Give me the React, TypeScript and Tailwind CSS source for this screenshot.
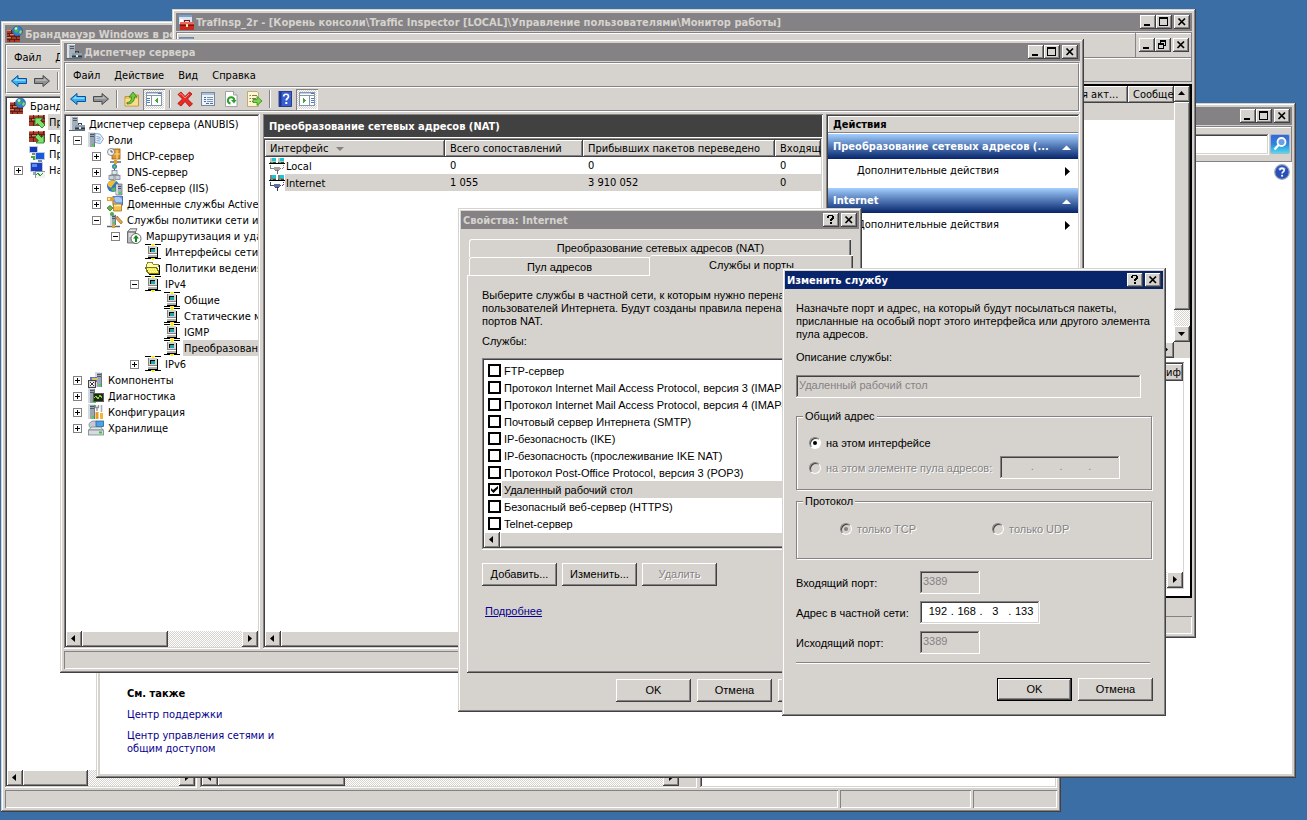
import React from "react";
import type { ReactNode } from "react";

/* ---------- shared 3D edges ---------- */
const WINDOW_EDGE =
  "bg-[#d6d3ce] shadow-[inset_-1px_-1px_#424142,inset_1px_1px_#d6d3ce,inset_-2px_-2px_#848284,inset_2px_2px_#fff]";
const RAISED =
  "bg-[#d6d3ce] shadow-[inset_-1px_-1px_#424142,inset_1px_1px_#fff,inset_-2px_-2px_#848284]";
const SUNKEN =
  "shadow-[inset_-1px_-1px_#fff,inset_1px_1px_#848284,inset_-2px_-2px_#d6d3ce,inset_2px_2px_#424142]";
const UI_FONT = "font-['DejaVu_Sans_Condensed','DejaVu_Sans',sans-serif]";
const DIALOG_FONT = "font-['Liberation_Sans',Arial,sans-serif]";
const DITHER =
  "bg-[repeating-conic-gradient(#fff_0_25%,#d6d3ce_0_50%)] bg-[length:2px_2px]";

/* ---------- icons ---------- */
function Ico({ children, crisp }: { children: ReactNode; crisp?: boolean }) {
  return (
    <svg
      className="block h-4 w-4 shrink-0"
      viewBox="0 0 16 16"
      shapeRendering={crisp ? "crispEdges" : "auto"}
      aria-hidden="true"
    >
      {children}
    </svg>
  );
}

function Tower({ x, y, w = 7, h = 13 }: { x: number; y: number; w?: number; h?: number }) {
  return (
    <g>
      <rect x={x} y={y} width={w} height={h} fill="#9aa7b2" />
      <rect x={x} y={y} width={2} height={h} fill="#d3dbe1" />
      <rect x={x + 2} y={y} width={w - 2} height={1} fill="#e4e9ed" />
      <rect x={x + 2} y={y + 2} width={w - 3} height={1} fill="#4d5a66" />
      <rect x={x + 2} y={y + 4} width={w - 3} height={1} fill="#4d5a66" />
      <rect x={x + w - 1} y={y + 1} width={1} height={h - 1} fill="#6c7985" />
      <rect x={x + w - 3} y={y + h - 3} width={2} height={2} fill="#3fd63f" />
    </g>
  );
}

const ServerBoxIcon = () => (
  <Ico crisp>
    <rect x={1} y={0} width={8} height={15} fill="#a4b0ba" />
    <rect x={1} y={0} width={2} height={15} fill="#dde4e9" />
    <rect x={3} y={0} width={6} height={1} fill="#e9eef1" />
    <rect x={4} y={2} width={4} height={1} fill="#4d5a66" />
    <rect x={4} y={4} width={4} height={1} fill="#4d5a66" />
    <rect x={0} y={14} width={9} height={1} fill="#56636e" />
    <path d="M9 9V7h3v2" fill="none" stroke="#39424a" />
    <rect x={6} y={9} width={10} height={6} fill="#5f6f7d" />
    <rect x={6} y={9} width={10} height={2} fill="#90a0ad" />
    <rect x={6} y={12} width={10} height={1} fill="#2f3942" />
    <rect x={10} y={11} width={2} height={2} fill="#dfe6ea" />
  </Ico>
);

const Bricks = () => (
  <g>
    <rect x={0} y={4} width={13} height={12} fill="#a63d2a" />
    <path
      d="M0 7.5h13M0 10.5h13M0 13.5h13M4.500 4v3M9.500 4v3M2.500 8v2M7.500 8v2M11.500 8v2M4.500 11v2M9.500 11v2M2.500 14v2M7.500 14v2"
      stroke="#5f1d13"
      fill="none"
    />
    <path d="M0 4.500h4M5 4.500h4M3 8.500h4M0 11.500h4" stroke="#d98a70" fill="none" />
  </g>
);

const FirewallIcon = () => (
  <Ico>
    <Bricks />
    <circle cx={10.500} cy={5} r={5} fill="#2f7fd0" stroke="#1b5796" strokeWidth={0.600} />
    <path d="M7 3c1-2 3-2.500 4.500-2.500L10 3l2 1-2 3-2-1z" fill="#4bb54a" />
    <path d="M13 4l2 1-1 3-2-1z" fill="#8fd86a" />
    <circle cx={9} cy={2.500} r={1.300} fill="#cfeaff" />
  </Ico>
);

const RuleIcon = ({ up }: { up?: boolean }) => (
  <Ico>
    <g transform="translate(0 -3)">
      <rect x={0} y={4} width={16} height={11} fill="#a63d2a" />
      <path
        d="M0 7.500h16M0 10.500h16M4.500 4v3M9.500 4v3M14.500 4v3M2.500 8v2M7.500 8v2M12.500 8v2M4.500 11v4M9.500 11v2"
        stroke="#5f1d13"
        fill="none"
      />
      <path d="M0 4.500h4M5 4.500h4M3 8.500h4M10 4.500h4" stroke="#d98a70" fill="none" />
    </g>
    {up ? (
      <path d="M6 4h8l-2.500 2.500L16 11l-3 3-4.500-4.500L6 12z" fill="#7ee26a" stroke="#147a1a" strokeWidth={0.800} />
    ) : (
      <path d="M15 13H7l2.500-2.500L6 7l3-3 3.500 3.500L15 5z" fill="#7ee26a" stroke="#147a1a" strokeWidth={0.800} />
    )}
  </Ico>
);

const LinkedPcIcon = () => (
  <Ico crisp>
    <rect x={0} y={0} width={9} height={7} fill="#c3ccd6" />
    <rect x={1} y={1} width={7} height={5} fill="#1238b8" />
    <rect x={3} y={7} width={3} height={2} fill="#7a8794" />
    <rect x={6} y={6} width={10} height={8} fill="#c3ccd6" />
    <rect x={7} y={7} width={8} height={6} fill="#1b58e0" />
    <rect x={9} y={14} width={4} height={2} fill="#7a8794" />
    <path d="M2 11h3v3" stroke="#3fae3f" strokeWidth={2} fill="none" />
  </Ico>
);

const MonitorIcon = () => (
  <Ico crisp>
    <rect x={1} y={0} width={13} height={10} fill="#c3ccd6" />
    <rect x={2} y={1} width={11} height={8} fill="#1b3fc0" />
    <rect x={3} y={2} width={5} height={3} fill="#5f8cf0" />
    <rect x={4} y={10} width={6} height={3} fill="#9aa7b2" />
    <rect x={6} y={9} width={10} height={7} fill="#f0f5ec" stroke="#8a949c" />
    <path d="M7 13l2-2 2 3 3-3" stroke="#2a9a3c" fill="none" />
  </Ico>
);

const ToolboxIcon = () => (
  <Ico crisp>
    <rect x={0} y={0} width={15} height={11} fill="#dbe4ee" />
    <path d="M0.500 0.500h14v10h-14z" fill="none" stroke="#70869c" />
    <rect x={1} y={1} width={13} height={2} fill="#7f9fc4" />
    <rect x={2} y={5} width={3} height={4} fill="#fff" />
    <path d="M6.500 8V6.500h5V8" stroke="#7a1511" fill="none" />
    <rect x={2} y={8} width={14} height={8} fill="#c42a22" />
    <rect x={2} y={8} width={14} height={2} fill="#ea6a5e" />
    <rect x={2} y={11} width={14} height={1} fill="#7a1511" />
    <rect x={8} y={10} width={2} height={3} fill="#f4e6a0" />
  </Ico>
);

const BackIcon = () => (
  <Ico>
    <path d="M0.500 8L7 2.500v3h8.500v5H7v3z" fill="#35aef2" stroke="#0c4f98" />
    <path d="M2.500 8L6 5v1.500h8.500v1.200H3z" fill="#9fe0ff" />
  </Ico>
);
const ForwardIcon = () => (
  <Ico>
    <path d="M15.500 8L9 2.500v3H0.500v5H9v3z" fill="#8f9193" stroke="#4a4b4d" />
    <path d="M13.500 8L10 5v1.500H1.500v1.200H13z" fill="#bcbec0" />
  </Ico>
);
const FolderUpIcon = () => (
  <Ico>
    <path d="M1 5.500h5l1.500-1.500H14.500V15H1z" fill="#f2c55c" stroke="#b5862a" strokeWidth={0.800} />
    <path d="M1.500 8h12.500v6.500H1.500z" fill="#f9dc8c" />
    <path d="M3 11.500c3 0 4.500-2 4.500-5.500H5L9 1l4 5h-2.500c0 4-2.500 7-7.500 7z" fill="#6ccc3c" stroke="#2f7d18" strokeWidth={0.800} />
  </Ico>
);
const PaneIcon = ({ right }: { right?: boolean }) => (
  <Ico crisp>
    <rect x={0} y={1} width={16} height={14} fill="#fff" />
    <rect x={0} y={1} width={16} height={1} fill="#8497ad" />
    <rect x={0} y={2} width={16} height={1} fill="#c3cfdb" />
    <rect x={0} y={4} width={16} height={1} fill="#8497ad" />
    <rect x={12} y={2} width={3} height={1} fill="#4d76c0" />
    <path d="M0.500 1.500v13h15v-13" stroke="#8497ad" fill="none" />
    <rect x={right ? 10 : 5} y={5} width={1} height={9} fill="#8497ad" />
    {right ? (
      <path d="M12 7.500h3M12 9.500h3M12 11.500h3" stroke="#4a7fc4" />
    ) : (
      <path d="M1 7.500h3M1 9.500h3M1 11.500h3" stroke="#4a7fc4" />
    )}
    {right ? <path d="M4 7l3 2.500L4 12z" fill="#3aa935" /> : <path d="M12 7L9 9.500l3 2.500z" fill="#3aa935" />}
  </Ico>
);
const DeleteIcon = () => (
  <Ico>
    <path d="M1 3.500L4 1l4 4.500L12.500 1 15 3l-4.500 5 5 5L12.500 15.500 8 10.500l-4 4.500L0.800 12.500 5.500 8z" fill="#ee2a22" stroke="#a01010" strokeWidth={0.800} />
    <path d="M2.500 3.500L4 2.500l4 4.500 4-4" stroke="#ff8a80" fill="none" />
  </Ico>
);
const PropertiesIcon = () => (
  <Ico crisp>
    <rect x={1.500} y={1.500} width={13} height={13} fill="#eef3f9" stroke="#72889f" />
    <rect x={2} y={2} width={12} height={2} fill="#a9c0da" />
    <path d="M3.500 6.500h2M3.500 8.500h2M3.500 10.500h2" stroke="#3d6fb4" />
    <path d="M7 6.500h6M7 8.500h6M7 10.500h6" stroke="#7d93a8" />
    <path d="M6 12.500h3M10 12.500h3" stroke="#3d6fb4" />
  </Ico>
);
const RefreshIcon = () => (
  <Ico>
    <path d="M2.500 0.500h8l3.500 3.500v11.500H2.500z" fill="#fff" stroke="#8d9296" strokeWidth={0.800} />
    <path d="M10.500 0.500v3.500H14" fill="#d9dde0" stroke="#8d9296" strokeWidth={0.800} />
    <path d="M7.500 12.500A3.200 3.200 0 1 1 11.300 9" fill="none" stroke="#2fa02b" strokeWidth={2} />
    <path d="M8 9h5.500l-2.500 3.500z" fill="#2fa02b" />
  </Ico>
);
const ExportIcon = () => (
  <Ico>
    <path d="M1.500 0.500H11l1.500 1.500v13.500h-11z" fill="#fdf6d3" stroke="#b59a55" strokeWidth={0.800} />
    <path d="M3.500 4.500H5M3.500 7.500H5M3.500 10.500H5M6 4.500h5M6 7.500h4M6 10.500h4" stroke="#8a7a4a" />
    <path d="M7 8.500h4V5.500l5 4.500-5 4.500v-3H7z" fill="#7ed348" stroke="#2f8a1b" strokeWidth={0.800} />
  </Ico>
);
const HelpBookIcon = () => (
  <Ico>
    <rect x={2} y={0.500} width={12.500} height={15} fill="#3a5fd0" stroke="#12297a" strokeWidth={0.800} />
    <rect x={2.500} y={1} width={2} height={14} fill="#1b358f" />
    <path d="M6.700 5.500c0-3 4.800-3 4.800 0 0 2-2.300 2-2.300 4" stroke="#fff" strokeWidth={1.700} fill="none" />
    <rect x={8.300} y={11} width={2} height={2} fill="#fff" />
  </Ico>
);

const RolesIcon = () => (
  <Ico>
    <Tower x={0} y={0} w={7} h={15} />
    <path d="M7 1.500l5 0.500 3.500 5-3 4.500-5.500-1z" fill="#e9f3fd" stroke="#6a93c0" strokeWidth={0.800} />
    <path d="M8.500 4.500l4 1M8.500 6.500l4.500 0.800M8.500 8.500l3.500 0.600" stroke="#6a93c0" strokeWidth={0.800} />
  </Ico>
);
const DhcpIcon = () => (
  <Ico>
    <rect x={5} y={1} width={8} height={10} fill="#e0982a" stroke="#93570c" strokeWidth={0.800} />
    <path d="M10 2v9M5 6h8" stroke="#ffd98a" />
    <circle cx={4} cy={4} r={3.500} fill="#f2f5f8" stroke="#6d7780" strokeWidth={0.800} />
    <path d="M4 2v2h2" stroke="#333" strokeWidth={0.800} fill="none" />
    <path d="M3 14h11" stroke="#5d6770" strokeWidth={1.500} />
    <rect x={7} y={12} width={3} height={4} fill="#e0a02a" />
  </Ico>
);
const DnsIcon = () => (
  <Ico>
    <circle cx={7.500} cy={2.500} r={2.500} fill="#2f7fc0" />
    <path d="M6 2l2-1 1 2-2 1.500z" fill="#5fc25a" />
    <path d="M7.500 5v2" stroke="#555" />
    <rect x={5} y={6.500} width={5} height={4} fill="#dfe5ea" stroke="#7a8791" strokeWidth={0.800} />
    <path d="M3 12v-1h9v1" stroke="#7a8791" fill="none" />
    <rect x={2} y={11.500} width={5} height={4} fill="#c9d2d9" stroke="#7a8791" strokeWidth={0.800} />
    <rect x={8} y={11.500} width={5} height={4} fill="#c9d2d9" stroke="#7a8791" strokeWidth={0.800} />
  </Ico>
);
const IisIcon = () => (
  <Ico>
    <circle cx={6} cy={6} r={6} fill="#2c76c8" />
    <path d="M1 2.500C4 0 8 0 9 1.500L6 5 4 8 1 6z" fill="#f3bc31" />
    <path d="M4 9l4-2 1 3-3 2z" fill="#58b858" />
    <path d="M9 4h6v11H9z" fill="#a4b0ba" stroke="#6c7985" strokeWidth={0.800} />
    <path d="M10 4.500v10" stroke="#e4e9ed" strokeWidth={1.500} />
    <path d="M11 6.500h3M11 8.500h3" stroke="#4d5a66" />
    <rect x={12} y={12} width={2} height={2} fill="#3fd63f" />
  </Ico>
);
const AdIcon = () => (
  <Ico>
    <rect x={6} y={0} width={9.500} height={9} fill="#6f9de0" stroke="#2f5c9e" strokeWidth={0.800} />
    <path d="M7 2l2-1h3l3 2v3H9z" fill="#a9c8f4" />
    <path d="M6.500 8h8v7h-8z" fill="#f0c04a" stroke="#a57719" strokeWidth={0.800} />
    <path d="M7 9.500h7" stroke="#fff0b8" strokeWidth={1.500} />
    <path d="M0 1h6l2 2-2 2H0z" fill="#e6a02a" />
    <circle cx={2} cy={3} r={1} fill="#fff" />
    <path d="M5 5l4 4" stroke="#e6a02a" strokeWidth={1.500} />
    <path d="M3 9.500l3 2.500-3 3-3-3z" fill="#6db04a" stroke="#3f7a24" strokeWidth={0.800} />
  </Ico>
);
const NpsIcon = () => (
  <Ico>
    <g transform="translate(3 2)">
      <Tower x={0} y={0} w={6} h={11} />
    </g>
    <circle cx={5} cy={2} r={2} fill="#4ca94a" />
    <path d="M10 4l5.500 6-1.500 2-4.500-5z" fill="#e8a64a" stroke="#99601a" strokeWidth={0.700} />
    <path d="M0 14.500h13" stroke="#5d6770" strokeWidth={1.500} />
    <rect x={5} y={13} width={3} height={3} fill="#e0a02a" />
  </Ico>
);
const RrasIcon = () => (
  <Ico>
    <path d="M1.500 4L4 0.800h7L9.500 4z" fill="#e8e8e8" stroke="#555" strokeWidth={0.800} />
    <path d="M1.500 4h8v11h-8z" fill="#b9bcc0" stroke="#555" strokeWidth={0.800} />
    <path d="M3 6h5M3 8h5" stroke="#fff" />
    <circle cx={10} cy={10.500} r={5} fill="#fff" stroke="#555" strokeWidth={0.900} />
    <path d="M10 7l3 3.500h-2V14H9v-3.500H7z" fill="#0b8a1a" />
  </Ico>
);
const NetIcon = () => (
  <Ico crisp>
    <rect x={0} y={0} width={16} height={1} fill="#000" />
    <rect x={6} y={0} width={4} height={1} fill="#f6ee1c" />
    <rect x={7} y={1} width={2} height={1} fill="#f6ee1c" />
    <rect x={3} y={2} width={9} height={8} fill="#848284" />
    <rect x={4} y={2} width={8} height={7} fill="#d6d3ce" />
    <rect x={5} y={4} width={5} height={4} fill="#000" />
    <rect x={6} y={5} width={4} height={3} fill="#18a8a8" />
    <rect x={3} y={11} width={10} height={2} fill="#b5b2ad" />
    <rect x={3} y={10} width={10} height={1} fill="#fff" />
    <rect x={12} y={3} width={1} height={10} fill="#000" />
    <rect x={3} y={13} width={10} height={1} fill="#000" />
    <rect x={0} y={14} width={16} height={1} fill="#000" />
    <rect x={6} y={14} width={4} height={1} fill="#f6ee1c" />
    <rect x={7} y={15} width={2} height={1} fill="#f6ee1c" />
  </Ico>
);
const FolderOpenIcon = () => (
  <Ico crisp>
    <path d="M1.500 12V4.500L3 2.500h4l1.500 2h5V7" fill="#fffbb0" stroke="#8a8a20" />
    <path d="M0.500 7.500h11l3 6h-11z" fill="#f7ef4a" stroke="#77771a" />
    <path d="M2 9.500h10M3 11.500h10" stroke="#fffde0" strokeDasharray="1 1" />
    <path d="M14.500 5v9M4 14.500h11" stroke="#000" />
  </Ico>
);
const ComponentsIcon = () => (
  <Ico crisp>
    <g transform="translate(6 0)">
      <Tower x={1} y={0} w={7} h={15} />
    </g>
    <rect x={2} y={5} width={7} height={5} fill="#5a78c4" />
    <rect x={4} y={6} width={6} height={2} fill="#e5b96a" />
    <rect x={0.500} y={8.500} width={7} height={7} fill="#d8d8d8" stroke="#444" />
    <rect x={2} y={10} width={4} height={4} fill="#333" />
    <rect x={3} y={10} width={2} height={4} fill="#fff" />
    <rect x={2} y={11} width={4} height={2} fill="#fff" />
    <rect x={3} y={11} width={2} height={2} fill="#333" />
  </Ico>
);
const DiagnosticsIcon = () => (
  <Ico crisp>
    <Tower x={0} y={0} w={7} h={15} />
    <rect x={5} y={5} width={10} height={8} fill="#1d2a14" stroke="#5c5c5c" />
    <path d="M6 10l2-2 2 3 2-4 2 3" stroke="#8fd13a" fill="none" />
    <rect x={6} y={14} width={2} height={1} fill="#3fd63f" />
  </Ico>
);
const ConfigIcon = () => (
  <Ico>
    <Tower x={0} y={0} w={7} h={15} />
    <path d="M9 8v7" stroke="#e89b1c" strokeWidth={3} />
    <path d="M13.500 9v6" stroke="#f2b53a" strokeWidth={3} />
    <path d="M9 7V3.500M7.500 1v2.500h3V1" stroke="#8c9399" strokeWidth={1.300} fill="none" />
    <path d="M13.500 1v7" stroke="#a8b0b6" strokeWidth={1.600} />
  </Ico>
);
const StorageIcon = () => (
  <Ico>
    <ellipse cx={6} cy={5} rx={5} ry={4} fill="#c3ccd2" stroke="#78848c" strokeWidth={0.800} />
    <rect x={8} y={1} width={7.500} height={5.500} fill="#4ba3e6" stroke="#23649c" strokeWidth={0.800} />
    <path d="M1 10l2-3h10l2 3z" fill="#e4e8ea" stroke="#78848c" strokeWidth={0.800} />
    <rect x={0.500} y={10} width={15} height={5} fill="#d5dbde" stroke="#78848c" strokeWidth={0.800} />
    <rect x={11} y={11.500} width={3} height={2} fill="#37c837" />
  </Ico>
);
const NicIcon = ({ selected }: { selected?: boolean }) => (
  <Ico crisp>
    <rect x={1} y={0} width={6} height={4} fill={selected ? "#7b8298" : "#c6c3bd"} />
    <rect x={3} y={0} width={4} height={3} fill="#18c8d0" />
    <rect x={9} y={0} width={6} height={4} fill={selected ? "#7b8298" : "#c6c3bd"} />
    <rect x={11} y={0} width={4} height={3} fill="#18c8d0" />
    <rect x={0} y={5} width={16} height={1} fill="#000" />
    <rect x={1} y={4} width={6} height={1} fill="#424142" />
    <rect x={9} y={4} width={6} height={1} fill="#424142" />
    <rect x={2} y={4} width={2} height={1} fill="#21d621" />
    <rect x={10} y={4} width={2} height={1} fill="#21d621" />
    <path d="M1.500 7v3.500h4" stroke={selected ? "#424a7b" : "#848284"} fill="none" />
    <path d="M14.500 7v3.500H11" stroke={selected ? "#424a7b" : "#848284"} strokeDasharray="1 1" fill="none" />
    <rect x={5} y={9} width={6} height={3} fill={selected ? "#63719c" : "#a5a2a5"} />
    <rect x={6} y={12} width={4} height={1} fill={selected ? "#424a7b" : "#848284"} />
    <rect x={8} y={12} width={1} height={4} fill={selected ? "#31395a" : "#636163"} />
  </Ico>
);

/* ---------- window chrome ---------- */
type Glyph = "min" | "max" | "restore" | "close" | "help";
const GLYPH_LABEL: Record<Glyph, string> = {
  min: "Свернуть",
  max: "Развернуть",
  restore: "Восстановить",
  close: "Закрыть",
  help: "Справка",
};

function CaptionButton({ glyph }: { glyph: Glyph }) {
  return (
    <button type="button" aria-label={GLYPH_LABEL[glyph]} className={`block h-[14px] w-4 shrink-0 ${RAISED}`}>
      <svg className="block" width={16} height={14} viewBox="0 0 16 14" aria-hidden="true">
        {glyph === "min" && <path d="M4 9h6v2H4z" shapeRendering="crispEdges" />}
        {glyph === "max" && (
          <path d="M3 2h9v9H3zM4 4v6h7V4z" fillRule="evenodd" shapeRendering="crispEdges" />
        )}
        {glyph === "restore" && (
          <path
            d="M5 2h6v6H9v3H3V5h2zM6 4v1h3v2h1V4zM4 7v3h4V7z"
            fillRule="evenodd"
            shapeRendering="crispEdges"
          />
        )}
        {glyph === "close" && <path d="M4.500 3.500l6.500 6.500M11 3.500L4.500 10" stroke="#000" strokeWidth={1.700} />}
        {glyph === "help" && (
          <path
            d="M4 3h1V2h5v1h1v3h-1v1H9v1H7V6h1V5h1V3H6v2H4zM7 9h2v2H7z"
            shapeRendering="crispEdges"
          />
        )}
      </svg>
    </button>
  );
}

function TitleBar({
  title,
  icon,
  active,
  buttons,
}: {
  title: string;
  icon?: ReactNode;
  active?: boolean;
  buttons: "window" | "dialog";
}) {
  return (
    <header
      className={`flex h-[18px] shrink-0 items-center gap-[2px] px-[2px] ${
        active ? "bg-[#08246b] text-white" : "bg-[#848284] text-[#d6d3ce]"
      }`}
    >
      {icon}
      <h2 className="min-w-0 flex-1 overflow-hidden whitespace-nowrap pt-[2px] text-[11px] font-bold leading-4">
        {title}
      </h2>
      <div className="flex">
        {buttons === "window" ? (
          <>
            <CaptionButton glyph="min" />
            <CaptionButton glyph="max" />
          </>
        ) : (
          <CaptionButton glyph="help" />
        )}
        <div className="ml-[2px]">
          <CaptionButton glyph="close" />
        </div>
      </div>
    </header>
  );
}

function ScrollArrow({ dir }: { dir: "left" | "right" | "up" | "down" }) {
  const shapes = {
    left: "M9 4v7L5 7.500z",
    right: "M6 4v7l4-3.500z",
    up: "M4 9h7L7.500 5z",
    down: "M4 6h7l-3.500 4z",
  };
  const labels = { left: "Влево", right: "Вправо", up: "Вверх", down: "Вниз" };
  return (
    <button type="button" aria-label={labels[dir]} className={`block h-4 w-4 shrink-0 ${RAISED}`}>
      <svg className="block" width={16} height={16} viewBox="0 0 16 16" aria-hidden="true">
        <path d={shapes[dir]} />
      </svg>
    </button>
  );
}

function HScroll({ thumb }: { thumb: string }) {
  return (
    <div className={`flex h-4 shrink-0 ${DITHER}`}>
      <ScrollArrow dir="left" />
      <div className={`h-4 ${thumb} ${RAISED}`} />
      <div className="ml-auto">
        <ScrollArrow dir="right" />
      </div>
    </div>
  );
}

function Rebar({ menu, tools }: { menu: string[]; tools: ReactNode }) {
  return (
    <div className="mb-[2px] mt-px h-[50px] shrink-0 border border-[#848284] border-b-white border-r-white">
      <div className="flex h-full flex-col border border-white border-b-[#848284] border-r-[#848284]">
        <nav className="flex h-[22px] items-center">
          {menu.map((m) => (
            <button key={m} type="button" className="shrink-0 px-[7px] pt-[2px] text-[11px] leading-4">
              {m}
            </button>
          ))}
        </nav>
        <div className="h-[2px] border-b border-t border-b-white border-t-[#848284]" />
        <div className="flex flex-1 items-center overflow-hidden">{tools}</div>
      </div>
    </div>
  );
}

const ToolSep = () => (
  <div className="ml-1 mr-[2px] h-[18px] w-[2px] shrink-0 border-l border-r border-l-[#848284] border-r-white" />
);

function ToolButton({ label, pressed, children }: { label: string; pressed?: boolean; children: ReactNode }) {
  return (
    <button
      type="button"
      aria-label={label}
      className={
        pressed
          ? `flex h-[21px] w-[22px] shrink-0 items-center justify-center shadow-[inset_1px_1px_#848284,inset_-1px_-1px_#fff] ${DITHER}`
          : "flex h-[21px] w-[23px] shrink-0 items-center justify-center"
      }
    >
      {children}
    </button>
  );
}

/* ---------- tree ---------- */
type Node = {
  level: number;
  label: string;
  icon: ReactNode;
  box?: "+" | "-";
  selected?: boolean;
};

function Expander({ sign }: { sign: "+" | "-" }) {
  return (
    <svg className="block shrink-0" width={9} height={9} viewBox="0 0 9 9" shapeRendering="crispEdges" aria-hidden="true">
      <rect x={0.500} y={0.500} width={8} height={8} fill="#fff" stroke="#848284" />
      <path d="M2 4h5v1H2z" />
      {sign === "+" && <path d="M4 2h1v5H4z" />}
    </svg>
  );
}

const INDENT = [
  "pl-[3px]",
  "pl-[7px]",
  "pl-[26px]",
  "pl-[45px]",
  "pl-[64px]",
  "pl-[83px]",
];

function Tree({ nodes }: { nodes: Node[] }) {
  return (
    <ul className="min-h-0 flex-1 overflow-hidden">
      {nodes.map((n, i) => (
        <li key={i} className={`flex h-4 items-center ${INDENT[n.level]}`}>
          {n.level > 0 && (
            <span className="mr-[6px] flex w-[9px] shrink-0">{n.box && <Expander sign={n.box} />}</span>
          )}
          {n.icon}
          <span
            className={`ml-[3px] h-4 whitespace-nowrap pl-px text-[11px] leading-[18px] ${
              n.selected ? "min-w-0 flex-1 bg-[#d6d3ce]" : ""
            }`}
          >
            {n.label}
          </span>
        </li>
      ))}
    </ul>
  );
}

/* ---------- buttons ---------- */
function PushButton({
  children,
  disabled,
  isDefault,
  label,
}: {
  children?: ReactNode;
  disabled?: boolean;
  isDefault?: boolean;
  label?: string;
}) {
  return (
    <button
      type="button"
      disabled={disabled}
      aria-label={label}
      className={`h-[23px] w-[75px] shrink-0 text-[11px] leading-[13px] ${
        isDefault
          ? "border border-black bg-[#d6d3ce] shadow-[inset_-1px_-1px_#424142,inset_1px_1px_#fff,inset_-2px_-2px_#848284]"
          : RAISED
      } ${disabled ? "text-[#848284] [text-shadow:1px_1px_#fff]" : "text-black"}`}
    >
      {children}
    </button>
  );
}

/* ---------- windows ---------- */
function FirewallWindow() {
  return (
    <section className={`absolute left-px top-[21px] flex h-[791px] w-[1060px] flex-col p-1 ${WINDOW_EDGE}`}>
      <TitleBar title="Брандмауэр Windows в режиме повышенной безопасности" icon={<FirewallIcon />} buttons="window" />
      <Rebar
        menu={["Файл", "Действие"]}
        tools={
          <>
            <ToolButton label="Назад"><BackIcon /></ToolButton>
            <ToolButton label="Вперед"><ForwardIcon /></ToolButton>
            <ToolSep />
          </>
        }
      />
      <div className="mb-[2px] flex min-h-0 flex-1 gap-[3px]">
        <div className={`flex w-48 shrink-0 flex-col bg-white p-[2px] ${SUNKEN}`}>
          <Tree
            nodes={[
              { level: 0, label: "Брандмауэр Windows", icon: <FirewallIcon /> },
              { level: 1, label: "Правила для входящих", icon: <RuleIcon up />, selected: true },
              { level: 1, label: "Правила исходящих", icon: <RuleIcon /> },
              { level: 1, label: "Правила безопасности", icon: <LinkedPcIcon /> },
              { level: 1, label: "Наблюдение", icon: <MonitorIcon />, box: "+" },
            ]}
          />
          <HScroll thumb="w-[65px]" />
        </div>
        <div className={`flex w-[497px] shrink-0 flex-col bg-white p-[2px] ${SUNKEN}`}>
          <div className="flex-1" />
          <div className="bg-[#d6d3ce] pr-4">
            <HScroll thumb="w-[127px]" />
          </div>
        </div>
        <div className={`min-w-0 flex-1 bg-white ${SUNKEN}`} />
      </div>
      <footer className="flex h-[18px] shrink-0 gap-[2px]">
        <div className="flex-1 shadow-[inset_1px_1px_#848284,inset_-1px_-1px_#fff]" />
        <div className="w-[131px] shadow-[inset_1px_1px_#848284,inset_-1px_-1px_#fff]" />
        <div className="w-[84px] shadow-[inset_1px_1px_#848284,inset_-1px_-1px_#fff]" />
      </footer>
    </section>
  );
}

function ExplorerWindow() {
  return (
    <section className={`absolute left-24 top-[103px] flex h-[675px] w-[1200px] flex-col p-1 ${WINDOW_EDGE}`}>
      <TitleBar title="" buttons="window" />
      <div className="mt-px flex h-9 shrink-0 items-center justify-end border border-[#848284] border-l-white shadow-[inset_0_1px_#fff]">
        <input
          type="text"
          aria-label="Поиск"
          className={`h-[21px] w-[240px] bg-white px-1 text-[11px] outline-none ${SUNKEN}`}
        />
        <button type="button" aria-label="Найти" className="ml-px block h-[21px] w-[21px]">
          <svg className="block" width={21} height={21} viewBox="0 0 21 21" aria-hidden="true">
            <defs>
              <linearGradient id="searchFace" x1="0" y1="0" x2="0" y2="1">
                <stop offset="0" stopColor="#3c63d8" />
                <stop offset="0.500" stopColor="#2a86dd" />
                <stop offset="1" stopColor="#4fe0f0" />
              </linearGradient>
            </defs>
            <rect x={0.500} y={0.500} width={19} height={19} rx={1.500} fill="url(#searchFace)" stroke="#a6b7c9" />
            <circle cx={11.500} cy={8} r={4} fill="#6aa0e8" stroke="#fff" strokeWidth={1.800} />
            <path d="M8.500 11L4.500 15.500" stroke="#fff" strokeWidth={2.500} />
          </svg>
        </button>
      </div>
      <div className="flex min-h-0 flex-1 flex-col items-end bg-white pt-[2px]">
        <button type="button" aria-label="Справка" className="mr-[2px] block">
          <svg className="block" width={16} height={16} viewBox="0 0 16 16" aria-hidden="true">
            <circle cx={8} cy={8} r={7.300} fill="#2a50b8" stroke="#9aa6b8" strokeWidth={1.200} />
            <path d="M4 5c2-3 6-3 8 0-2 1.500-6 1.500-8 0z" fill="#6f97e6" />
            <path d="M5.800 6.300c0-2.800 4.400-2.800 4.400 0 0 1.700-2.100 1.600-2.100 3.300" stroke="#fff" strokeWidth={1.600} fill="none" />
            <rect x={7.200} y={10.800} width={1.800} height={1.800} fill="#fff" />
          </svg>
        </button>
        <aside className="mt-auto w-full pb-[19px] pl-[27px] text-[11px] leading-[13px] text-[#08008c]">
          <h3 className="mb-2 font-bold text-black">См. также</h3>
          <a href="#support" className="mb-2 block">Центр поддержки</a>
          <a href="#network" className="block w-[160px]">Центр управления сетями и общим доступом</a>
        </aside>
      </div>
    </section>
  );
}

function TrafInspWindow() {
  const head = `h-[17px] shrink-0 overflow-hidden whitespace-nowrap text-[11px] leading-[18px] ${RAISED}`;
  return (
    <section className={`absolute left-[172px] top-[9px] flex h-[629px] w-[1024px] flex-col p-1 ${WINDOW_EDGE}`}>
      <TitleBar
        title={"TrafInsp_2r - [Корень консоли\\Traffic Inspector [LOCAL]\\Управление пользователями\\Монитор работы]"}
        icon={<ToolboxIcon />}
        buttons="window"
      />
      <div className="mt-px h-[50px] shrink-0 border border-[#848284] shadow-[inset_1px_1px_#fff]">
        <div className="flex h-[25px] items-center border-b border-[#848284] px-[2px]">
          <ToolboxIcon />
          <div className="ml-auto flex h-full items-center border-l border-[#848284] pl-[3px]">
            <CaptionButton glyph="min" />
            <CaptionButton glyph="restore" />
            <div className="ml-[2px]">
              <CaptionButton glyph="close" />
            </div>
          </div>
        </div>
        <div className="h-px bg-white" />
      </div>
      <div className="mt-[2px] flex min-h-0 flex-1 flex-col border-2 border-black bg-white">
        <div className="flex h-[272px] shrink-0 flex-col">
          <div className="flex min-h-0 flex-1">
            <div className="flex min-w-0 flex-1 flex-col">
              <div className="flex justify-end">
                <div className={`flex-1 ${head}`} />
                <div className={`w-[72px] pl-[26px] ${head}`}>я акт...</div>
                <div className={`w-[46px] pl-[5px] ${head}`}>Сообще</div>
              </div>
              <div className="h-[17px] bg-[#d6d3ce]" />
            </div>
            <div className={`flex w-4 shrink-0 flex-col ${DITHER}`}>
              <ScrollArrow dir="up" />
              <div className={`h-[208px] ${RAISED}`} />
              <div className="mt-auto">
                <ScrollArrow dir="down" />
              </div>
            </div>
          </div>
          <div className="bg-[#d6d3ce] pr-4">
            <HScroll thumb="w-[700px]" />
          </div>
        </div>
        <div className={`mb-[6px] mr-[5px] mt-1 flex min-h-0 flex-1 flex-col bg-white p-[2px] ${SUNKEN}`}>
          <div className="flex">
            <div className={`flex-1 ${head}`} />
            <div className={`w-[60px] pr-[2px] text-right ${head}`}>Тариф</div>
          </div>
          <div className="flex-1" />
          <HScroll thumb="w-[700px]" />
        </div>
      </div>
      <footer className="mt-[18px] h-[18px] shrink-0 shadow-[inset_1px_1px_#848284,inset_-1px_-1px_#fff]" />
    </section>
  );
}

const SERVER_TREE: Node[] = [
  { level: 0, label: "Диспетчер сервера (ANUBIS)", icon: <ServerBoxIcon /> },
  { level: 1, label: "Роли", icon: <RolesIcon />, box: "-" },
  { level: 2, label: "DHCP-сервер", icon: <DhcpIcon />, box: "+" },
  { level: 2, label: "DNS-сервер", icon: <DnsIcon />, box: "+" },
  { level: 2, label: "Веб-сервер (IIS)", icon: <IisIcon />, box: "+" },
  { level: 2, label: "Доменные службы Active", icon: <AdIcon />, box: "+" },
  { level: 2, label: "Службы политики сети и", icon: <NpsIcon />, box: "-" },
  { level: 3, label: "Маршрутизация и уда", icon: <RrasIcon />, box: "-" },
  { level: 4, label: "Интерфейсы сети", icon: <NetIcon /> },
  { level: 4, label: "Политики ведения", icon: <FolderOpenIcon /> },
  { level: 4, label: "IPv4", icon: <NetIcon />, box: "-" },
  { level: 5, label: "Общие", icon: <NetIcon /> },
  { level: 5, label: "Статические м", icon: <NetIcon /> },
  { level: 5, label: "IGMP", icon: <NetIcon /> },
  { level: 5, label: "Преобразовани", icon: <NetIcon />, selected: true },
  { level: 4, label: "IPv6", icon: <NetIcon />, box: "+" },
  { level: 1, label: "Компоненты", icon: <ComponentsIcon />, box: "+" },
  { level: 1, label: "Диагностика", icon: <DiagnosticsIcon />, box: "+" },
  { level: 1, label: "Конфигурация", icon: <ConfigIcon />, box: "+" },
  { level: 1, label: "Хранилище", icon: <StorageIcon />, box: "+" },
];

function ActionGroup({ title }: { title: string }) {
  return (
    <div className="mb-[5px]">
      <h4 className="flex h-[25px] items-center justify-between bg-gradient-to-b from-[#a5cfff] to-[#08246b] pl-[5px] pr-[7px] pt-[2px] text-[11px] font-bold text-white">
        <span className="overflow-hidden whitespace-nowrap">{title}</span>
        <svg width={9} height={5} viewBox="0 0 9 5" className="shrink-0" aria-hidden="true">
          <path d="M0 5L4.500 0.500 9 5z" fill="#fff" />
        </svg>
      </h4>
      <button type="button" className="flex h-6 w-full items-center justify-between bg-white pl-[29px] pr-2 pt-px text-[11px]">
        Дополнительные действия
        <svg width={5} height={9} viewBox="0 0 5 9" aria-hidden="true">
          <path d="M0 0l5 4.500L0 9z" />
        </svg>
      </button>
    </div>
  );
}

function ServerManagerWindow() {
  const th = `h-[17px] overflow-hidden whitespace-nowrap p-0 pl-[5px] pt-px text-left font-normal leading-4 ${RAISED}`;
  return (
    <section className={`absolute left-[60px] top-[39px] flex h-[634px] w-[1024px] flex-col p-1 ${WINDOW_EDGE}`}>
      <TitleBar title="Диспетчер сервера" icon={<ServerBoxIcon />} buttons="window" />
      <Rebar
        menu={["Файл", "Действие", "Вид", "Справка"]}
        tools={
          <>
            <ToolButton label="Назад"><BackIcon /></ToolButton>
            <ToolButton label="Вперед"><ForwardIcon /></ToolButton>
            <ToolSep />
            <ToolButton label="На уровень вверх"><FolderUpIcon /></ToolButton>
            <ToolButton label="Дерево консоли" pressed><PaneIcon /></ToolButton>
            <ToolSep />
            <ToolButton label="Удалить"><DeleteIcon /></ToolButton>
            <ToolButton label="Свойства"><PropertiesIcon /></ToolButton>
            <ToolButton label="Обновить"><RefreshIcon /></ToolButton>
            <ToolButton label="Экспортировать список"><ExportIcon /></ToolButton>
            <ToolSep />
            <ToolButton label="Справка"><HelpBookIcon /></ToolButton>
            <ToolButton label="Панель действий" pressed><PaneIcon right /></ToolButton>
          </>
        }
      />
      <div className="mb-[2px] flex min-h-0 flex-1 gap-[3px]">
        <div className={`flex w-[196px] shrink-0 flex-col bg-white p-[2px] ${SUNKEN}`}>
          <Tree nodes={SERVER_TREE} />
          <HScroll thumb="w-[86px]" />
        </div>

        <div className="flex min-w-0 flex-1 flex-col">
          <h3 className="h-6 shrink-0 overflow-hidden bg-[#424142] px-[6px] text-[11px] font-bold leading-[26px] text-white shadow-[inset_1px_1px_#848284,inset_-1px_-1px_#fff]">
            Преобразование сетевых адресов (NAT)
          </h3>
          <div className={`flex min-h-0 flex-1 flex-col bg-white p-[2px] ${SUNKEN}`}>
            <table className="w-full table-fixed border-collapse text-[11px]">
              <colgroup>
                <col className="w-[180px]" />
                <col className="w-[138px]" />
                <col className="w-[192px]" />
                <col />
              </colgroup>
              <thead>
                <tr className="h-[17px]">
                  <th className={th}>
                    <span className="flex items-center gap-2">
                      Интерфейс
                      <svg width={8} height={4} viewBox="0 0 8 4" aria-hidden="true">
                        <path d="M0 0h8L4 4z" fill="#848284" />
                      </svg>
                    </span>
                  </th>
                  <th className={th}>Всего сопоставлений</th>
                  <th className={th}>Прибывших пакетов переведено</th>
                  <th className={th}>Входящ</th>
                </tr>
              </thead>
              <tbody>
                {[
                  ["Local", "0", "0", "0"],
                  ["Internet", "1 055", "3 910 052", "0"],
                ].map((row, i) => {
                  const bg = i === 1 ? "bg-[#d6d3ce]" : "";
                  return (
                    <tr key={row[0]} className="h-[17px] leading-4">
                      <td className="p-0">
                        <div className="flex h-[17px] items-center pl-1">
                          <NicIcon selected={i === 1} />
                          <span className={`h-[17px] flex-1 pl-px leading-[19px] ${bg}`}>{row[0]}</span>
                        </div>
                      </td>
                      <td className={`p-0 pl-[5px] pt-px ${bg}`}>{row[1]}</td>
                      <td className={`p-0 pl-[5px] pt-px ${bg}`}>{row[2]}</td>
                      <td className={`p-0 pl-[5px] pt-px ${bg}`}>{row[3]}</td>
                    </tr>
                  );
                })}
              </tbody>
            </table>
            <div className="flex-1" />
            <HScroll thumb="w-[460px]" />
          </div>
        </div>

        <aside className={`w-[254px] shrink-0 bg-white p-[2px] ${SUNKEN}`}>
          <h3 className="mb-px h-[17px] border-b border-[#848284] bg-[#d6d3ce] pl-[5px] text-[11px] font-bold leading-[18px] shadow-[inset_1px_1px_#fff]">
            Действия
          </h3>
          <ActionGroup title="Преобразование сетевых адресов (..." />
          <ActionGroup title="Internet" />
        </aside>
      </div>
      <footer className="h-[18px] shrink-0 shadow-[inset_1px_1px_#848284,inset_-1px_-1px_#fff]" />
    </section>
  );
}

const SERVICES: [string, boolean][] = [
  ["FTP-сервер", false],
  ["Протокол Internet Mail Access Protocol, версия 3 (IMAP3)", false],
  ["Протокол Internet Mail Access Protocol, версия 4 (IMAP4)", false],
  ["Почтовый сервер Интернета (SMTP)", false],
  ["IP-безопасность (IKE)", false],
  ["IP-безопасность (прослеживание IKE NAT)", false],
  ["Протокол Post-Office Protocol, версия 3 (POP3)", false],
  ["Удаленный рабочий стол", true],
  ["Безопасный веб-сервер (HTTPS)", false],
  ["Telnet-сервер", false],
];

function PropertiesDialog() {
  return (
    <section className={`absolute left-[458px] top-[208px] flex h-[504px] w-[404px] flex-col p-[3px] ${WINDOW_EDGE}`}>
      <TitleBar title="Свойства: Internet" buttons="dialog" />
      <div className={`flex min-h-0 flex-1 flex-col px-[6px] pt-[10px] text-[11px] leading-[13px] ${DIALOG_FONT}`}>
        <div className="px-[2px]">
          <button
            type="button"
            className="block h-[18px] w-full rounded-tl-[3px] border-l border-t border-white bg-[#d6d3ce] shadow-[inset_-1px_0_#424142,inset_-2px_0_#848284]"
          >
            Преобразование сетевых адресов (NAT)
          </button>
          <div className="flex h-[18px]">
            <button
              type="button"
              className="h-[18px] w-[181px] rounded-tl-[3px] border border-b-0 border-white bg-[#d6d3ce] pt-px"
            >
              Пул адресов
            </button>
            <button
              type="button"
              className="relative -mr-[2px] -mt-[2px] h-[21px] flex-1 rounded-tl-[3px] border-t border-white bg-[#d6d3ce] pb-[2px] shadow-[inset_-1px_0_#424142,inset_-2px_0_#848284]"
            >
              Службы и порты
            </button>
          </div>
        </div>
        <div className={`flex min-h-0 flex-1 flex-col items-start px-[15px] pt-[14px] ${RAISED}`}>
          <p className="whitespace-nowrap">
            Выберите службы в частной сети, к которым нужно перенаправлять
            <br />
            пользователей Интернета. Будут созданы правила перенаправления
            <br />
            портов NAT.
          </p>
          <p className="mt-[7px]">Службы:</p>
          <div className={`mt-[10px] w-full overflow-hidden bg-white p-[2px] pt-[4px] ${SUNKEN}`}>
            {SERVICES.map(([name, on]) => (
              <label key={name} className="relative flex h-[17px] items-center whitespace-nowrap pl-1">
                <input
                  type="checkbox"
                  defaultChecked={on}
                  className="m-0 block h-[13px] w-[13px] shrink-0 appearance-none border-2 border-black bg-white"
                />
                {on && (
                  <svg className="absolute left-[7px] top-[5px]" width={7} height={7} viewBox="0 0 7 7" aria-hidden="true">
                    <path d="M0 2l2 2 5-4v2.500L2.500 7 0 4.500z" />
                  </svg>
                )}
                <span className={`ml-px h-[17px] flex-1 pl-[2px] leading-[18px] ${on ? "bg-[#d6d3ce]" : ""}`}>{name}</span>
              </label>
            ))}
            <HScroll thumb="w-[310px]" />
          </div>
          <div className="mt-[13px] flex gap-[5px]">
            <PushButton>Добавить...</PushButton>
            <PushButton>Изменить...</PushButton>
            <PushButton disabled>Удалить</PushButton>
          </div>
          <a href="#more" className="ml-[3px] mt-[19px] text-[#08008c] underline">
            Подробнее
          </a>
        </div>
        <div className="flex justify-end gap-[6px] pb-[7px] pt-[6px]">
          <PushButton>OK</PushButton>
          <PushButton>Отмена</PushButton>
          <PushButton label="Применить" disabled />
        </div>
      </div>
    </section>
  );
}

function Radio({
  name,
  label,
  checked,
  disabled,
}: {
  name: string;
  label: string;
  checked?: boolean;
  disabled?: boolean;
}) {
  return (
    <label className={`flex items-center gap-[5px] ${disabled ? "text-[#848284] [text-shadow:1px_1px_#fff]" : ""}`}>
      <input
        type="radio"
        name={name}
        defaultChecked={checked}
        disabled={disabled}
        className={`m-0 flex h-3 w-3 shrink-0 appearance-none items-center justify-center rounded-full border border-b-white border-l-[#848284] border-r-white border-t-[#848284] shadow-[inset_1px_1px_#424142] checked:before:block checked:before:h-1 checked:before:w-1 checked:before:rounded-full checked:before:content-[''] ${
          disabled ? "bg-[#d6d3ce] checked:before:bg-[#848284]" : "bg-white checked:before:bg-black"
        }`}
      />
      <span className="whitespace-nowrap pt-[2px]">{label}</span>
    </label>
  );
}

function IpField({ id, label, parts, disabled }: { id: string; label: string; parts: string[]; disabled?: boolean }) {
  return (
    <div
      role="group"
      aria-label={label}
      className={`flex h-[23px] w-[120px] shrink-0 items-start pl-[5px] pr-[3px] pt-1 ${SUNKEN} ${
        disabled ? "bg-[#d6d3ce] text-[#848284]" : "bg-white"
      }`}
    >
      {parts.map((p, i) => (
        <React.Fragment key={i}>
          {i > 0 && <span className="w-[3px] leading-[13px]">.</span>}
          <input
            id={i === 0 ? id : undefined}
            aria-label={`Октет ${i + 1}`}
            type="text"
            defaultValue={p}
            disabled={disabled}
            className="h-[13px] min-w-0 flex-1 bg-transparent p-0 text-center leading-[13px] outline-none"
          />
        </React.Fragment>
      ))}
    </div>
  );
}

function EditServiceDialog() {
  const group = "border border-[#848284] shadow-[inset_1px_1px_#fff,1px_1px_#fff]";
  const portInput = `h-[23px] w-[60px] bg-[#d6d3ce] px-[3px] pb-[4px] text-[#848284] outline-none ${SUNKEN}`;
  return (
    <section className={`absolute left-[782px] top-[268px] flex h-[448px] w-[384px] flex-col p-[3px] ${WINDOW_EDGE}`}>
      <TitleBar title="Изменить службу" buttons="dialog" active />
      <form className={`flex flex-1 flex-col pl-[11px] pr-[10px] pt-[13px] text-[11px] leading-[13px] ${DIALOG_FONT}`}>
        <p className="whitespace-nowrap">
          Назначьте порт и адрес, на который будут посылаться пакеты,
          <br />
          присланные на особый порт этого интерфейса или другого элемента
          <br />
          пула адресов.
        </p>
        <label htmlFor="svc-name" className="mt-[10px]">
          Описание службы:
        </label>
        <input
          id="svc-name"
          type="text"
          disabled
          defaultValue="Удаленный рабочий стол"
          className={`mr-3 mt-[11px] h-[23px] bg-[#d6d3ce] px-[3px] pb-[3px] text-[#848284] outline-none ${SUNKEN}`}
        />
        <fieldset className={`mr-px mt-3 h-20 pl-[12px] ${group}`}>
          <legend className="-ml-[6px] bg-[#d6d3ce] px-[2px]">Общий адрес</legend>
          <div className="pt-3">
            <Radio name="addr" label="на этом интерфейсе" checked />
          </div>
          <div className="mt-[6px] flex items-center gap-2">
            <div className="w-[183px]">
              <Radio name="addr" label="на этом элементе пула адресов:" disabled />
            </div>
            <IpField id="pool" label="Адрес пула" parts={["", "", "", ""]} disabled />
          </div>
        </fieldset>
        <fieldset className={`mr-px mt-[5px] h-16 pl-[43px] ${group}`}>
          <legend className="-ml-[37px] bg-[#d6d3ce] px-[2px]">Протокол</legend>
          <div className="flex pt-[13px]">
            <div className="w-[152px]">
              <Radio name="proto" label="только TCP" checked disabled />
            </div>
            <Radio name="proto" label="только UDP" disabled />
          </div>
        </fieldset>
        <div className="mt-3 grid grid-cols-[124px_1fr] items-center gap-y-[7px]">
          <label htmlFor="in-port" className="pt-px">Входящий порт:</label>
          <input id="in-port" type="text" disabled defaultValue="3389" className={portInput} />
          <label htmlFor="private-ip" className="pt-px">Адрес в частной сети:</label>
          <IpField id="private-ip" label="Адрес в частной сети" parts={["192", "168", "3", "133"]} />
          <label htmlFor="out-port" className="pt-px">Исходящий порт:</label>
          <input id="out-port" type="text" disabled defaultValue="3389" className={portInput} />
        </div>
        <div className="mr-[3px] mt-[8px] h-[2px] border-b border-t border-b-white border-t-[#848284]" />
        <div className="mt-[14px] flex justify-end gap-[6px]">
          <PushButton isDefault>OK</PushButton>
          <PushButton>Отмена</PushButton>
        </div>
      </form>
    </section>
  );
}

export default function App() {
  return (
    <main className={`relative h-screen w-full overflow-hidden bg-[#3a6ea5] text-black ${UI_FONT}`}>
      <FirewallWindow />
      <ExplorerWindow />
      <TrafInspWindow />
      <ServerManagerWindow />
      <PropertiesDialog />
      <EditServiceDialog />
    </main>
  );
}
